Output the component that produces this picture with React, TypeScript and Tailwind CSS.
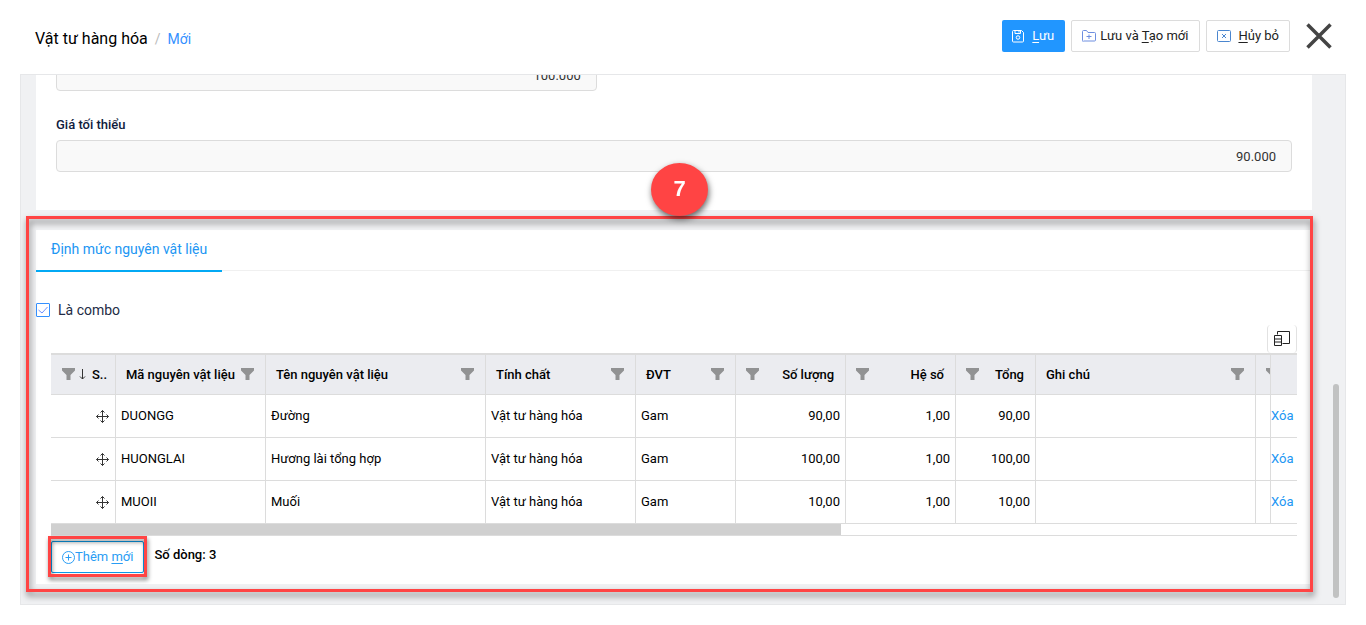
import { useState } from 'react';
import clsx from 'clsx';

type Align = 'left' | 'right';

const columns: { id: string; label: string; width: string; align: Align }[] = [
  { id: 'code', label: 'Mã nguyên vật liệu', width: 'w-[150px]', align: 'left' },
  { id: 'name', label: 'Tên nguyên vật liệu', width: 'w-[220px]', align: 'left' },
  { id: 'kind', label: 'Tính chất', width: 'w-[150px]', align: 'left' },
  { id: 'unit', label: 'ĐVT', width: 'w-[100px]', align: 'left' },
  { id: 'quantity', label: 'Số lượng', width: 'w-[110px]', align: 'right' },
  { id: 'factor', label: 'Hệ số', width: 'w-[110px]', align: 'right' },
  { id: 'total', label: 'Tổng', width: 'w-[80px]', align: 'right' },
  { id: 'note', label: 'Ghi chú', width: '', align: 'left' },
];

const materials: Record<string, string>[] = [
  { code: 'DUONGG', name: 'Đường', kind: 'Vật tư hàng hóa', unit: 'Gam', quantity: '90,00', factor: '1,00', total: '90,00', note: '' },
  { code: 'HUONGLAI', name: 'Hương lài tổng hợp', kind: 'Vật tư hàng hóa', unit: 'Gam', quantity: '100,00', factor: '1,00', total: '100,00', note: '' },
  { code: 'MUOII', name: 'Muối', kind: 'Vật tư hàng hóa', unit: 'Gam', quantity: '10,00', factor: '1,00', total: '10,00', note: '' },
];

const FunnelIcon = () => (
  <svg width="13" height="13" viewBox="0 0 13 13" className="shrink-0" fill="#919293">
    <path d="M0 0h13v2.5L8.5 7V12h-4V7L0 2.5z" />
  </svg>
);

const MoveIcon = () => (
  <svg width="14" height="13" viewBox="0 0 14 13" fill="none" stroke="#333" className="inline-block align-middle">
    <path d="M6.5 .5v12M.5 6.5h12M4.5 2.5l2-2 2 2M4.5 10.5l2 2 2-2M2.5 4.5l-2 2 2 2M10.5 4.5l2 2-2 2" />
  </svg>
);

const SaveIcon = () => (
  <svg width="13" height="13" viewBox="0 0 13 13" fill="none" stroke="currentColor">
    <path d="M1.5 .5h8l2 2v8.500a1 1 0 0 1-1 1h-9a1 1 0 0 1-1-1v-9.500a1 1 0 0 1 1-1z" />
    <path d="M3 .5v3h5.500v-3M7 1v1.500" />
    <circle cx="6" cy="7.500" r="1.750" />
  </svg>
);

const FolderPlusIcon = () => (
  <svg width="14" height="12" viewBox="0 0 14 12" fill="none" stroke="#6e8fe0">
    <path d="M.5 10.500V1.500a1 1 0 0 1 1-1h3l1.500 2h6.500a1 1 0 0 1 1 1v6.500a1 1 0 0 1-1 1h-11a.5.5 0 0 1-1-.5z" />
    <path d="M7 4.500v4.500M4.500 6.500h5" />
  </svg>
);

const CancelIcon = () => (
  <svg width="14" height="12" viewBox="0 0 14 12" fill="none" stroke="#4a86cf">
    <rect x=".5" y=".5" width="13" height="11" rx="1" />
    <path d="M5 4l4 4M9 4l-4 4" />
  </svg>
);

const ColumnsIcon = () => (
  <svg width="18" height="16" viewBox="0 0 18 16" fill="none" stroke="#222">
    <path d="M4.500 3.500v-3h12v12H9.500" />
    <path d="M1.500 4.500h7v10h-7zM1.500 8h7M1.500 11h7" />
  </svg>
);

const Field = ({ id, label, value, className }: { id: string; label: string; value: string; className: string }) => (
  <input
    id={id}
    aria-label={label}
    defaultValue={value}
    className={clsx('block h-8 rounded border border-[#dcdcdc] bg-[#f9f9f9] px-[15px] text-right text-[13px] text-[#333]', className)}
  />
);

const Header = () => (
  <header className="flex h-[74px] items-start justify-between pl-[35px] pr-[34px] pt-5">
    <div className="flex items-center gap-[7px] pt-[7px]">
      <h1 className="text-[16px] leading-6 text-black">Vật tư hàng hóa</h1>
      <span className="text-[14px] text-[#bbb]">/</span>
      <a href="#new" className="text-[14px] text-[#3490ff]">Mới</a>
    </div>
    <div className="flex items-center gap-1.5 text-[13px]">
      <button className="flex h-8 items-center gap-[7px] rounded-xs bg-[#2196ff] pl-[10px] pr-[11px] text-white">
        <SaveIcon />
        <span><u className="underline-offset-2">L</u>ưu</span>
      </button>
      <button className="flex h-8 items-center gap-1 rounded-xs border border-[#dcdcdc] pl-[10px] pr-[11px] text-[#222]">
        <FolderPlusIcon />
        <span>Lưu và <u className="underline-offset-2">T</u>ạo mới</span>
      </button>
      <button className="flex h-8 items-center gap-[7px] rounded-xs border border-[#dcdcdc] px-[10px] text-[#222]">
        <CancelIcon />
        <span><u className="underline-offset-2">H</u>ủy bỏ</span>
      </button>
      <button aria-label="Đóng" className="ml-[10px]">
        <svg width="26" height="26" viewBox="0 0 26 26" fill="none" stroke="#444" strokeWidth="3.500">
          <path d="M1.500 1.500l23 23M24.500 1.500l-23 23" />
        </svg>
      </button>
    </div>
  </header>
);

const MaterialTable = () => (
  <table className="w-full table-fixed border-separate border-spacing-0 border-t-2 border-[#dcdcdc] text-[13px] text-black">
    <thead>
      <tr className="h-10 bg-[#ebecf0]">
        <th className="w-[65px] border-b border-r border-[#dcdcdc] p-0 font-medium">
          <div className="flex items-center pl-[11px]">
            <FunnelIcon />
            <svg width="7" height="11" viewBox="0 0 7 11" fill="none" stroke="#333" className="ml-1 mr-1.5">
              <path d="M3.500 0v10M1 7.500l2.500 2.500L6 7.500" />
            </svg>
            S..
          </div>
        </th>
        {columns.map((col) => (
          <th key={col.id} className={clsx('border-b border-r border-[#dcdcdc] p-0 font-medium', col.width)}>
            <div className={clsx('flex items-center justify-between whitespace-nowrap pl-[10px] pr-[11px]', col.align === 'right' && 'flex-row-reverse')}>
              {col.label}
              <FunnelIcon />
            </div>
          </th>
        ))}
        <th className="w-[15px] border-b border-r border-[#dcdcdc] p-0">
          <div className="flex overflow-hidden pl-[10px]">
            <FunnelIcon />
          </div>
        </th>
        <th className="w-[26px] border-b border-[#dcdcdc] p-0" />
      </tr>
    </thead>
    <tbody>
      {materials.map((row) => (
        <tr key={row.code} className="h-[43px]">
          <td className="border-b border-r border-[#dcdcdc] py-0 pr-[5px] text-right">
            <MoveIcon />
          </td>
          {columns.map((col) => (
            <td
              key={col.id}
              className={clsx('whitespace-nowrap border-b border-r border-[#dcdcdc] px-[5px]', col.align === 'right' && 'text-right')}
            >
              {row[col.id]}
            </td>
          ))}
          <td className="border-b border-r border-[#dcdcdc] p-0" />
          <td className="whitespace-nowrap border-b border-[#dcdcdc] p-0">
            <a href="#delete" className="text-[#2196f3]">Xóa</a>
          </td>
        </tr>
      ))}
    </tbody>
  </table>
);

const App = () => {
  const [isCombo, setIsCombo] = useState(true);

  return (
    <div className="bg-white font-['Roboto','Noto_Sans',sans-serif] text-[13px] leading-5">
      <Header />

      <main className="relative mx-5 overflow-hidden border border-[#e6e7e9] bg-[#f0f1f3] pb-5 pl-[15px] pr-[33px]">
        <section className="bg-white px-5 pb-[38px]">
          <Field id="price" label="Giá bán" value="100.000" className="-mt-4 w-7/16" />
          <label htmlFor="min-price" className="mb-[5px] mt-6 block font-medium text-[#0f1b3d]">Giá tối thiểu</label>
          <Field id="min-price" label="Giá tối thiểu" value="90.000" className="w-full" />
        </section>

        <section className="relative mt-5 bg-white pb-[11px]">
          <div className="flex border-b border-[#f0f0f0]">
            <button className="-mb-0.5 border-b-2 border-[#03a9f4] px-[15px] pb-[11px] pt-[9px] text-[14px] leading-5 text-[#2196f3]">
              Định mức nguyên vật liệu
            </button>
          </div>

          <label className="mt-[29px] flex items-center gap-2 text-[14px] text-[#222b45]">
            <span className="grid">
              <input
                type="checkbox"
                checked={isCombo}
                onChange={(e) => setIsCombo(e.target.checked)}
                className="col-start-1 row-start-1 size-[14px] appearance-none rounded-[1px] border border-[#3490ff] bg-white"
              />
              {isCombo && (
                <svg width="14" height="14" viewBox="0 0 14 14" fill="none" stroke="#6f8fff" className="pointer-events-none col-start-1 row-start-1">
                  <path d="M2.500 7l3.500 3 5.500-6" />
                </svg>
              )}
            </span>
            Là combo
          </label>

          <div className="px-[15px] pt-[5px]">
            <div className="flex justify-end">
              <button aria-label="Chọn cột" className="grid h-7 w-[30px] place-items-center rounded border-x border-[#e2e2e2]">
                <ColumnsIcon />
              </button>
            </div>
            <MaterialTable />
            <div className="h-3 border-b border-[#dcdcdc]">
              <div className="h-[11px] w-[790px] max-w-full bg-[#d0d0d0]" />
            </div>
            <div className="flex items-start gap-[10px] pt-1">
              <div className="relative mt-px">
                <button className="flex h-8 items-center rounded-xs border border-[#0a9bea] px-[10px] text-[#2a9df4]">
                  <svg width="13" height="13" viewBox="0 0 13 13" fill="none" stroke="currentColor">
                    <circle cx="6.500" cy="6.500" r="6" />
                    <path d="M6.500 3.500v6M3.500 6.500h6" />
                  </svg>
                  <span>Thêm <u className="underline-offset-2">m</u>ới</span>
                </button>
                <div className="pointer-events-none absolute -inset-x-[3px] -bottom-1 -top-[5px] border-3 border-[#ff4444] drop-shadow-[1px_3px_2px_rgba(0,0,0,0.5)]" />
              </div>
              <strong className="pt-[5px] font-medium text-black">Số dòng: 3</strong>
            </div>
          </div>

          {/* Callout frame with its step number */}
          <div className="pointer-events-none absolute -bottom-2 -left-[10px] -right-px -top-[14px] border-3 border-[#ff4444] drop-shadow-[1px_4px_3px_rgba(0,0,0,0.5)]" />
          <div className="pointer-events-none absolute -top-[67px] left-1/2 flex h-[53px] w-[57px] -translate-x-[23px] items-center justify-center rounded-[50%] bg-[#ff4444] pb-0.5 font-['Liberation_Sans',sans-serif] text-[22px] font-bold text-white drop-shadow-[1px_3px_3px_rgba(0,0,0,0.6)]">
            7
          </div>
        </section>

        {/* Scroll thumb */}
        <div className="absolute bottom-1.5 right-1.5 h-[214px] w-1.5 rounded-full bg-[#c1c2c2]" />
      </main>
    </div>
  );
};

export default App;
